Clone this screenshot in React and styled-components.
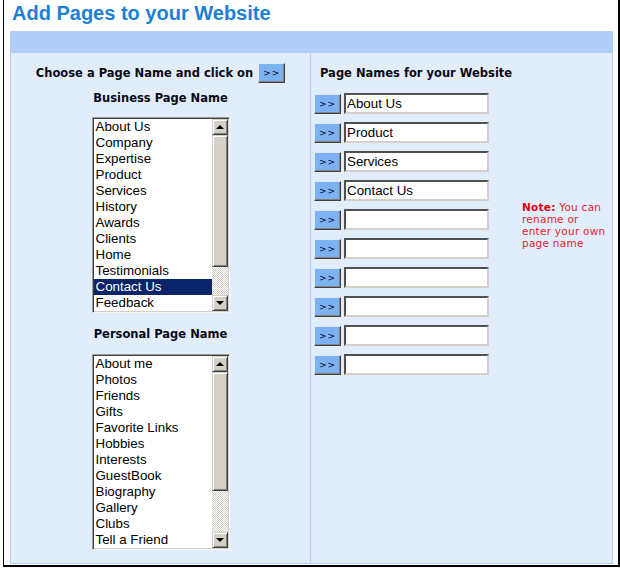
import React from 'react';
import styled, { createGlobalStyle } from 'styled-components';

const GlobalStyle = createGlobalStyle`
  html, body { margin: 0; padding: 0; background: #fff; }
  body {
    width: 620px;
    height: 568px;
    overflow: hidden;
    font-family: 'Liberation Sans', Arial, sans-serif;
  }
`;

const Frame = styled.div`
  box-sizing: border-box;
  margin-left: 3px;
  width: 617px;
  height: 567px;
  border-left: 1px solid #000;
  border-right: 2px solid #000;
  border-bottom: 2px solid #000;
  padding: 1px 5px 0 6px;
`;

const Title = styled.h1`
  margin: 0 0 0 2px;
  height: 24px;
  font-family: 'Liberation Sans', Arial, sans-serif;
  font-size: 20px;
  line-height: 25px;
  font-weight: bold;
  color: #1c80d6;
`;

const Bar = styled.div`
  margin-top: 6px;
  height: 22px;
  background: #b0cef8;
`;

const Content = styled.div`
  display: grid;
  grid-template-columns: 300px 300px;
  height: 510px;
  background: #e1edfb;
  border: 1px solid #b0cef8;
  border-top: none;
`;

const LeftColumn = styled.div`
  display: flex;
  flex-direction: column;
  align-items: center;
  padding-top: 10px;
  border-right: 1px solid #b0cef8;
`;

const RightColumn = styled.div`
  padding: 10px 0 0 3px;
`;

const HeaderRow = styled.div`
  display: flex;
  align-items: center;
  gap: 5px;
  height: 20px;
`;

const Label = styled.div`
  font-family: 'DejaVu Sans', Verdana, sans-serif;
  font-size: 11.5px;
  font-weight: bold;
  line-height: ${({ $lh }) => $lh || 14}px;
  color: #0a0a14;
  margin-top: ${({ $mt }) => $mt || 0}px;
  padding-left: ${({ $pl }) => $pl || 0}px;
  white-space: nowrap;
`;

const ArrowButton = styled.button`
  box-sizing: border-box;
  width: 27px;
  height: 20px;
  padding: 0 0 1px;
  margin: 0;
  background: #7cb2f2;
  border: 1px solid;
  border-color: #dce9fa #404040 #404040 #dce9fa;
  box-shadow: inset -1px -1px 0 #808080;
  font-family: 'DejaVu Sans', Verdana, sans-serif;
  font-size: 9px;
  letter-spacing: 1px;
  color: #00002a;
  cursor: pointer;
`;

const ListBox = styled.div`
  box-sizing: border-box;
  display: flex;
  width: 138px;
  height: 196px;
  margin-top: ${({ $mt }) => $mt}px;
  background: #fff;
  border: 1px solid;
  border-color: #9c9a94 #f4f4f4 #f4f4f4 #9c9a94;
  box-shadow: inset 1px 1px 0 #404040, inset -1px -1px 0 #d4d0c8;
  padding: 1px;
`;

const Items = styled.div`
  flex: 1;
  overflow: hidden;
`;

const Item = styled.div`
  height: 16px;
  line-height: 16px;
  padding-left: 2px;
  font-family: 'Liberation Sans', Arial, sans-serif;
  font-size: 13.33px;
  white-space: nowrap;
  color: ${({ $selected }) => ($selected ? '#fff' : '#000')};
  background: ${({ $selected }) => ($selected ? '#0a246a' : 'transparent')};
`;

const ScrollBar = styled.div`
  display: flex;
  flex-direction: column;
  width: 16px;
`;

const ScrollButton = styled.div`
  box-sizing: border-box;
  display: flex;
  align-items: center;
  justify-content: center;
  width: 16px;
  height: 16px;
  background: #d4d0c8;
  border: 1px solid;
  border-color: #d4d0c8 #404040 #404040 #d4d0c8;
  box-shadow: inset 1px 1px 0 #fff, inset -1px -1px 0 #808080;
`;

const Thumb = styled(ScrollButton)`
  height: ${({ $h }) => $h}px;
`;

const Track = styled.div`
  flex: 1;
  background: repeating-conic-gradient(#d4d0c8 0 25%, #fff 0 50%) 0 0 / 2px 2px;
`;

const Triangle = styled.span`
  width: 0;
  height: 0;
  border-left: 4px solid transparent;
  border-right: 4px solid transparent;
  ${({ $down }) =>
    $down ? 'border-top: 4px solid #000;' : 'border-bottom: 4px solid #000;'}
`;

const NamesArea = styled.div`
  display: flex;
  margin-top: 10px;
`;

const Rows = styled.div`
  display: flex;
  flex-direction: column;
  gap: 8px;
`;

const Row = styled.div`
  display: flex;
  align-items: flex-end;
  gap: 3px;
  height: 21px;
`;

const NameInput = styled.input`
  box-sizing: border-box;
  width: 145px;
  height: 21px;
  margin: 0;
  padding: 0 1px;
  background: #fff;
  border: 2px solid;
  border-color: #505050 #d4d0c8 #d4d0c8 #505050;
  font-family: 'Liberation Sans', Arial, sans-serif;
  font-size: 13.33px;
  color: #000;
  outline: none;
`;

const Note = styled.div`
  margin: 108px 0 0 33px;
  font-family: 'DejaVu Sans', Verdana, sans-serif;
  font-size: 10.5px;
  line-height: 12px;
  letter-spacing: 0.25px;
  white-space: nowrap;
  color: #ec1c2c;

  b { color: #e00010; }
`;

const business = [
  'About Us', 'Company', 'Expertise', 'Product', 'Services', 'History',
  'Awards', 'Clients', 'Home', 'Testimonials', 'Contact Us', 'Feedback',
];

const personal = [
  'About me', 'Photos', 'Friends', 'Gifts', 'Favorite Links', 'Hobbies',
  'Interests', 'GuestBook', 'Biography', 'Gallery', 'Clubs', 'Tell a Friend',
];

const pageNames = ['About Us', 'Product', 'Services', 'Contact Us', '', '', '', '', '', ''];

const List = ({ items, selected, thumb, mt }) => (
  <ListBox $mt={mt}>
    <Items>
      {items.map((name) => (
        <Item key={name} $selected={name === selected}>{name}</Item>
      ))}
    </Items>
    <ScrollBar>
      <ScrollButton><Triangle /></ScrollButton>
      <Thumb $h={thumb} />
      <Track />
      <ScrollButton><Triangle $down /></ScrollButton>
    </ScrollBar>
  </ListBox>
);

export default function App() {
  return (
    <>
      <GlobalStyle />
      <Frame>
        <Title>Add Pages to your Website</Title>
        <Bar />
        <Content>
          <LeftColumn>
            <HeaderRow>
              <Label $lh={20}>Choose a Page Name and click on</Label>
              <ArrowButton>&gt;&gt;</ArrowButton>
            </HeaderRow>
            <Label $mt={8}>Business Page Name</Label>
            <List items={business} selected="Contact Us" thumb={132} mt={12} />
            <Label $mt={14}>Personal Page Name</Label>
            <List items={personal} thumb={119} mt={13} />
          </LeftColumn>
          <RightColumn>
            <Label $lh={20} $pl={6}>Page Names for your Website</Label>
            <NamesArea>
              <Rows>
                {pageNames.map((name, i) => (
                  <Row key={i}>
                    <ArrowButton>&gt;&gt;</ArrowButton>
                    <NameInput defaultValue={name} />
                  </Row>
                ))}
              </Rows>
              <Note>
                <b>Note:</b> You can<br />
                rename or<br />
                enter your own<br />
                page name
              </Note>
            </NamesArea>
          </RightColumn>
        </Content>
      </Frame>
    </>
  );
}
